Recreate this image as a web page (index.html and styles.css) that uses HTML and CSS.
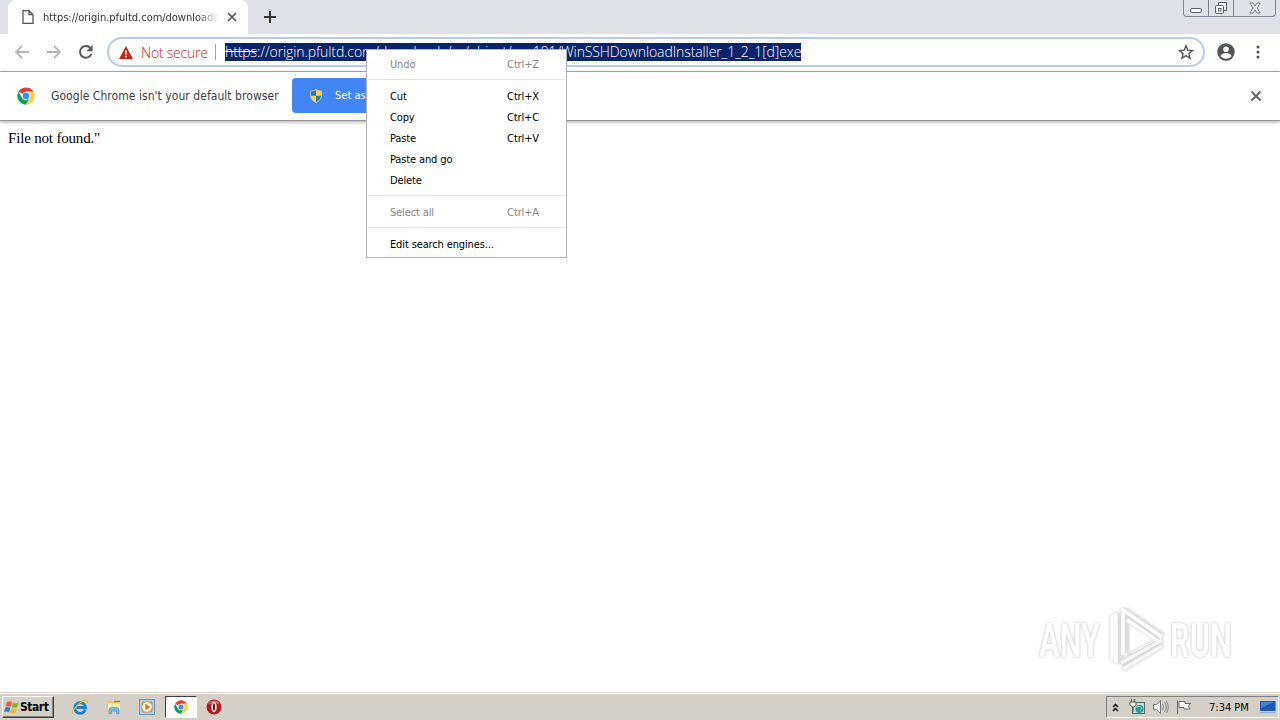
FILE: index.html
```
<!doctype html>
<html>
	<head>
		<meta charset="utf-8">
		<title>origin.pfultd.com</title>
		<link rel="stylesheet" href="styles.css">
	</head>
	<body>
		<svg width="0" height="0" class="defs">
			<symbol id="chrome" viewBox="0 0 48 48">
				<circle cx="24" cy="24" r="23" fill="#fff"/>
				<path d="M24 24L4.1 12.5A23 23 0 0 1 43.9 12.5L24 12.5z" fill="#e33b2e"/>
				<path d="M4.1 12.5A23 23 0 0 0 24 47L34 29.7 24 24 14 29.7z" fill="#109d58"/>
				<path d="M43.9 12.5A23 23 0 0 1 24 47L34 29.7 34 18 24 12.5z" fill="#ffcd40"/>
				<circle cx="24" cy="24" r="11.5" fill="#fff"/>
				<circle cx="24" cy="24" r="8.8" fill="#4285f4"/>
			</symbol>
		</svg>

		<div id="tabstrip">
			<div class="tab">
				<svg class="page" width="12" height="14" viewBox="0 0 12 14"><path d="M1 .7h6l4 4v8.6H1zM7 .7v4h4" fill="#fff" stroke="#555" stroke-width="1.3"/></svg>
				<span class="title">https://origin.pfultd.com/downloads</span>
				<svg width="10" height="10" viewBox="0 0 10 10"><path d="M1 1l8 8M9 1L1 9" stroke="#555" stroke-width="1.7"/></svg>
			</div>
			<svg class="newtab" width="12" height="12" viewBox="0 0 12 12"><path d="M6 0v12M0 6h12" stroke="#333" stroke-width="2"/></svg>
			<div class="winbuttons">
				<span class="min"><svg width="14" height="16" viewBox="0 0 14 16"><rect x="1.5" y="8.5" width="11" height="4" rx="1.5" fill="#fff" stroke="#555f6c"/></svg></span>
				<span class="max"><svg width="14" height="16" viewBox="0 0 14 16"><path d="M4.500 5V2.500h8v8H10" fill="#fff" stroke="#555f6c"/><rect x="1.500" y="5.500" width="8" height="8" rx="1" fill="#fff" stroke="#555f6c"/><rect x="4.500" y="8.500" width="2.500" height="2.500" fill="none" stroke="#555f6c"/></svg></span>
				<span class="close"><svg width="14" height="16" viewBox="0 0 14 16"><path d="M2 3h3l2 3 2-3h3L9 8l3 5H9l-2-3-2 3H2l3-5z" fill="#fff" stroke="#6a7480"/></svg></span>
			</div>
		</div>

		<div id="toolbar">
			<svg width="16" height="16" viewBox="0 0 16 16"><path d="M15 8H2M8 2L2 8l6 6" fill="none" stroke="#b4b6b8" stroke-width="1.8"/></svg>
			<svg width="16" height="16" viewBox="0 0 16 16"><path d="M1 8h13M8 2l6 6-6 6" fill="none" stroke="#b4b6b8" stroke-width="1.8"/></svg>
			<svg width="16" height="16" viewBox="0 0 16 16"><path d="M13.400 10A5.900 5.900 0 1 1 12.400 4" fill="none" stroke="#55585c" stroke-width="2"/><path d="M14.600 1v6.200H8.400z" fill="#55585c"/></svg>
			<div id="omnibox">
				<svg width="14" height="13" viewBox="0 0 14 13"><path d="M7 0l7 13H0z" fill="#c5281c"/><path d="M7 4.500v4M7 9.700v1.700" stroke="#fff" stroke-width="1.500"/></svg>
				<span class="insecure">Not secure</span>
				<span class="divider"></span>
				<span class="url"><s>https</s>://origin.pfultd.com/downloads/cs/object/ssp191/WinSSHDownloadInstaller_1_2_1[d]exe</span>
				<svg class="star" width="16" height="16" viewBox="0 0 16 16"><path d="M8 1.700l1.800 4.400 4.700.4-3.600 3.100 1.100 4.600L8 11.700l-4 2.500 1.100-4.600-3.600-3.100 4.700-.4z" fill="none" stroke="#55585c" stroke-width="1.400"/></svg>
			</div>
			<svg class="avatar" width="18" height="18" viewBox="0 0 18 18"><circle cx="9" cy="9" r="8.700" fill="#505459"/><circle cx="9" cy="6.300" r="2.800" fill="#fff"/><path d="M3.500 13c1-2.300 3.300-2.700 5.500-2.700s4.500.4 5.500 2.700c-1.300 1.800-3.300 2.700-5.500 2.700S4.800 14.800 3.500 13z" fill="#fff"/></svg>
			<svg class="dots" width="4" height="14" viewBox="0 0 4 14" fill="#505459"><circle cx="2" cy="2" r="1.500"/><circle cx="2" cy="7" r="1.500"/><circle cx="2" cy="12" r="1.500"/></svg>
		</div>

		<div id="infobar">
			<svg width="18" height="18"><use href="#chrome"/></svg>
			<span class="message">Google Chrome isn't your default browser</span>
			<div class="button">
				<svg width="14" height="14" viewBox="0 0 14 16">
					<path d="M7 .5C5 2 3 2.300.700 2.300V7c0 4 2.600 7 6.300 8.500z" fill="#2f6fd0"/>
					<path d="M7 .5c2 1.500 4 1.800 6.300 1.800V7c0 4-2.600 7-6.300 8.500z" fill="#f8d848"/>
					<path d="M.7 7.800H7v7.700C3.500 14 1.200 11.400.7 7.800z" fill="#f8d848"/>
					<path d="M13.300 7.800H7v7.700c3.500-1.500 5.800-4.100 6.300-7.700z" fill="#2878c8"/>
					<path d="M7 .6C5 2 3 2.400.700 2.400V7c0 4 2.600 6.900 6.300 8.400 3.700-1.500 6.300-4.400 6.300-8.400V2.400C11 2.400 9 2 7 .6z" fill="none" stroke="#d8cf90"/>
				</svg>
				<span>Set as</span>
			</div>
			<svg class="dismiss" width="12" height="12" viewBox="0 0 12 12"><path d="M1.500 1.500l9 9M10.500 1.500l-9 9" stroke="#606367" stroke-width="1.900"/></svg>
		</div>

		<div id="content">
			File not found."
			<div class="watermark">
				<span>ANY</span>
				<svg width="60" height="66" viewBox="0 0 60 66" fill="none">
					<path d="M7 8v46M13 6v50M18 2v42M18 3l38 26M24 16v30l26-14zM17 55l38-23M16 61l39-24" stroke="#e4e4e4" stroke-width="6" opacity=".6"/>
					<path d="M5 54V10l5-3M9 8v48M16 48V3l39 27M20 13l32 22" stroke="#fff" stroke-width="3.500"/>
					<path d="M14 56l41-23M16 62l39-23M24 45l22-12" stroke="#f6f6f6" stroke-width="3.500"/>
					<path d="M22 17v29l24-13z" fill="#fff" stroke="#e2e2e2"/>
				</svg>
				<span>RUN</span>
			</div>
		</div>

		<div id="taskbar">
			<div class="start">
				<svg width="16" height="15" viewBox="0 0 16 15">
					<path d="M3 2c2-1.300 3.600-1 5 0L6.700 6.700C5 5.700 3.600 5.700 1.700 6.500z" fill="#e8592a"/>
					<path d="M9 2.400c2 1 3.500 1 5.600 0L13.200 7c-2 1-3.600.9-5.400 0z" fill="#7db72f"/>
					<path d="M1.400 7.600c1.800-.8 3.300-.7 5 .2l-1.300 4.600c-1.600-1-3-1.200-5-.3z" fill="#2d7fd6"/>
					<path d="M7.500 8.200c1.800.9 3.400 1 5.400 0l-1.300 4.700c-2 1-3.600.8-5.400-.1z" fill="#f6b91c"/>
				</svg>
				<b>Start</b>
			</div>
			<div class="launch">
				<svg width="16" height="16" viewBox="0 0 16 16">
					<path d="M13.300 10.500A5.400 5.400 0 1 1 13.500 8.500H4.500" fill="none" stroke="#1c7fd0" stroke-width="2.800"/>
					<path d="M1 14.800C-1 11 12-1 15 1.400c.8.700.4 2-.4 3.200" fill="none" stroke="#e5bd35" stroke-width="1.300"/>
				</svg>
			</div>
			<div class="launch">
				<svg width="16" height="16" viewBox="0 0 16 16">
					<path d="M1 3l1-1h4l1 1h7v10H1z" fill="#edc95a"/><path d="M2 4.500h12v7H2z" fill="#fbeeb0"/>
					<path d="M8 2.500h6" stroke="#58a840" stroke-width="1.500"/>
					<path d="M3 15v-4q0-2.500 2.500-2.500h5q2.500 0 2.500 2.500v4h-2.500v-3h-5v3z" fill="#78b9e3" stroke="#4d91c4" stroke-width=".6"/>
				</svg>
			</div>
			<div class="launch">
				<svg width="16" height="16" viewBox="0 0 16 16"><rect x=".5" y=".5" width="15" height="15" fill="#a8d0f0" stroke="#5c9ccd"/><rect x="2.500" y="2.500" width="11" height="11" rx="2" fill="#f18a18"/><circle cx="8" cy="8" r="4.800" fill="#fff"/><path d="M6.200 4.700L11.500 8l-5.300 3.300z" fill="#e87510"/></svg>
			</div>
			<div class="launch active"><svg width="14" height="14"><use href="#chrome"/></svg></div>
			<div class="launch">
				<svg width="16" height="16" viewBox="0 0 16 16"><circle cx="8" cy="8" r="7.500" fill="#b31820"/><path d="M2 5.500a6.500 6.500 0 0 1 12 0q-6-3-12 0z" fill="#dc6265"/><ellipse cx="8" cy="8" rx="2.100" ry="4.800" fill="#d8d0c8" stroke="#fff"/><ellipse cx="8" cy="8" rx="1" ry="3.800" fill="#5c1015"/></svg>
			</div>
			<div class="tray">
				<svg class="chevrons" width="7" height="9" viewBox="0 0 7 9"><path d="M1 4l2.500-2.500L6 4M1 8l2.500-2.500L6 8" fill="none" stroke="#000" stroke-width="1.500"/></svg>
				<svg class="net" width="16" height="16" viewBox="0 0 16 16"><rect x="3.500" y="3.500" width="12" height="11" fill="#b8dff0" stroke="#59686c"/><circle cx="10.500" cy="10" r="4" fill="#2b9b93"/><path d="M7 8q3-2 6 1l-2 3" fill="none" stroke="#8fd0b0"/><path d="M1 3h6v3q-1 2-3 2T1 6z" fill="#f5f5ea" stroke="#576046"/><path d="M2.500 0v3M5.500 0v3M4 8v5" stroke="#576046" stroke-width="1.200"/></svg>
				<svg class="sound" width="17" height="16" viewBox="0 0 17 16"><path d="M1.500 5.500h3l4-4v13l-4-4h-3z" fill="#fff" stroke="#777"/><path d="M10.500 5q2 3 0 6M12.500 3q3.500 5 0 10M14.500 2q3.500 6 0 12" fill="none" stroke="#888"/></svg>
				<svg class="flag" width="16" height="16" viewBox="0 0 16 16"><path d="M1.500 15V1.500M3 2.500h6v2h5.500l-2 2.500 1.500 3H8V8.500H3z" fill="#fff" stroke="#666"/></svg>
				<span class="clock">7:34 PM</span>
				<svg class="desktop" width="16" height="14" viewBox="0 0 16 14"><path d="M0 1h15.500v10H0z" fill="#1d58b0"/><path d="M1 2h13.500L1 8z" fill="#3c85dc"/><path d="M0 12.500h15" stroke="#8ba9ce"/></svg>
			</div>
		</div>

		<ul id="menu">
			<li class="disabled">Undo <span>Ctrl+Z</span></li>
			<li class="sep"></li>
			<li>Cut <span>Ctrl+X</span></li>
			<li>Copy <span>Ctrl+C</span></li>
			<li>Paste <span>Ctrl+V</span></li>
			<li>Paste and go</li>
			<li>Delete</li>
			<li class="sep"></li>
			<li class="disabled">Select all <span>Ctrl+A</span></li>
			<li class="sep"></li>
			<li>Edit search engines...</li>
		</ul>
	</body>
</html>
```
FILE: styles.css
```
* {
	box-sizing: border-box;
}
body {
	margin: 0;
	height: 720px;
	display: flex;
	flex-direction: column;
	overflow: hidden;
	background: #fff;
	font-family: "DejaVu Sans Condensed", "DejaVu Sans", sans-serif;
	font-stretch: condensed;
	font-size: 11px;
	white-space: nowrap;
}
svg {
	display: block;
	flex: none;
}
.defs {
	position: absolute;
}
#tabstrip {
	height: 34px;
	display: flex;
	background: #dee1e8;
}
.tab {
	width: 240px;
	height: 34px;
	margin-left: 8px;
	padding: 0 11px 0 14px;
	display: flex;
	align-items: center;
	background: #fff;
	border-radius: 8px 8px 0 0;
}
.title {
	width: 176px;
	margin: 0 8px 0 9px;
	overflow: hidden;
	color: #333;
	letter-spacing: -.03px;
	-webkit-mask-image: linear-gradient(90deg, #000 88%, transparent);
	mask-image: linear-gradient(90deg, #000 88%, transparent);
}
.newtab {
	margin: 11px 0 0 16px;
}
.winbuttons {
	display: flex;
	width: 93px;
	height: 17px;
	margin: 0 4px 0 auto;
	border: 1px solid #7c8591;
	border-top: 0;
	border-radius: 0 0 4px 4px;
	background: #dfe3e9;
}
.winbuttons span {
	width: 25px;
	display: flex;
	justify-content: center;
	border-right: 1px solid #7c8591;
}
.winbuttons .close {
	width: 41px;
	border: 0;
}
#toolbar {
	height: 38px;
	padding: 0 0 1px 14px;
	display: flex;
	align-items: center;
	gap: 16px;
	border-bottom: 1px solid #b2b3b6;
}
#omnibox {
	width: 1098px;
	height: 30px;
	margin-left: -3px;
	margin-right: -4px;
	padding: 0 9px 0 10px;
	display: flex;
	align-items: center;
	border: 2px solid #b5cbee;
	border-radius: 15px;
	font: 300 14px "Open Sans", sans-serif;
	letter-spacing: -.1px;
}
.insecure {
	width: 67px;
	margin-left: 8px;
	color: #c5281c;
	letter-spacing: -.22px;
}
.divider {
	width: 1px;
	height: 16px;
	margin: 0 9px 0 7px;
	background: #a5a5a5;
}
.url {
	width: 576px;
	height: 18px;
	line-height: 18px;
	background: #0a246a;
	color: #fff;
}
.star {
	margin-left: auto;
}
.dots {
	margin-left: 5px;
}
#infobar {
	height: 49px;
	padding: 0 18px 1px 17px;
	display: flex;
	align-items: center;
	border-bottom: 1px solid #949494;
	box-shadow: 0 1px 4px rgba(0, 0, 0, .35);
}
.message {
	width: 228px;
	margin-left: 16px;
	color: #3c3c3c;
	font-size: 12px;
	letter-spacing: .05px;
}
.button {
	height: 35px;
	width: 126px;
	margin-left: 13px;
	padding-left: 17px;
	display: flex;
	align-items: center;
	gap: 12px;
	border-radius: 4px;
	background: #4285f4;
	color: #fff;
}
.dismiss {
	margin-left: auto;
}
#content {
	flex: 1;
	padding: 8px;
	position: relative;
	font: 15px/18px "Liberation Serif", serif;
	letter-spacing: -.18px;
}
/* logo sits over the page, bottom right */
.watermark {
	position: absolute;
	right: 45px;
	bottom: 18px;
	display: flex;
	align-items: center;
	gap: 3px;
	font: bold 48px/66px "Roboto", sans-serif;
	letter-spacing: 0;
	color: #fff;
	text-shadow: 0 0 3px #bbb, 0 0 2px #ddd;
}
.watermark span {
	width: 65px;
	padding-top: 3px;
	transform: scaleX(.64);
	transform-origin: 0 50%;
}
.watermark svg {
	filter: drop-shadow(0 0 1.5px #bbb);
}
#taskbar {
	height: 28px;
	padding: 3px 0 0 2px;
	display: flex;
	background: #d4d0c8;
	border-top: 1px solid #d4d0c8;
	box-shadow: inset 0 1px #fff;
}
.start {
	width: 52px;
	height: 22px;
	padding-left: 1px;
	display: flex;
	align-items: center;
	border: 1px solid;
	border-color: #fff #404040 #404040 #fff;
	box-shadow: inset -1px -1px #808080;
	font-size: 12px;
	letter-spacing: -.45px;
}
.launch {
	width: 32px;
	height: 22px;
	margin-right: 1.6px;
	display: flex;
	align-items: center;
	justify-content: center;
}
.start + .launch {
	margin-left: 10px;
}
.active {
	background: #fff;
	border: 1px solid;
	border-color: #404040 #fff #fff #404040;
}
.tray {
	width: 173px;
	height: 22px;
	margin-left: auto;
	margin-right: 1px;
	padding-left: 5px;
	display: flex;
	align-items: center;
	border: 1px solid;
	border-color: #808080 #fff #fff #808080;
}
.net {
	margin-left: 10px;
}
.sound {
	margin-left: 7px;
}
.flag {
	margin-left: 7px;
}
.clock {
	width: 40px;
	margin-left: 17px;
}
.desktop {
	margin-left: 11px;
}
#menu {
	position: absolute;
	left: 366px;
	top: 49px;
	width: 201px;
	height: 209px;
	margin: 0;
	padding: 3px 0;
	list-style: none;
	background: #fff;
	border: 1px solid #b4b4b4;
	letter-spacing: -.13px;
}
#menu li {
	height: 21px;
	padding: 2px 27px 0 23px;
	display: flex;
	align-items: center;
	justify-content: space-between;
}
#menu .sep {
	height: 11px;
	padding: 0 1px;
}
#menu .sep:after {
	content: "";
	flex: 1;
	height: 1px;
	background: #e4e4e4;
}
#menu .disabled {
	color: #858585;
}
```
